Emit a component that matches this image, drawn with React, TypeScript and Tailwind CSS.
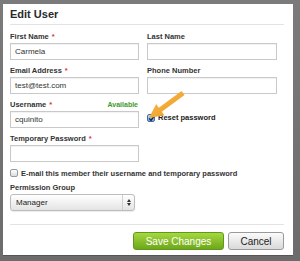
import { ReactNode } from "react";

const font = { fontFamily: '"Liberation Sans", Arial, sans-serif' };

function Label({ children, req, extra }: { children: ReactNode; req?: boolean; extra?: ReactNode }) {
   return (
      <div className="mb-[2px] flex h-[9px] items-center justify-between text-[7.5px] leading-[9px] font-bold text-[#333]">
         <span>
            {children}
            {req && <span className="ml-[3px] text-[#d9342b]">*</span>}
         </span>
         {extra}
      </div>
   );
}

function Field({ label, value, req, extra }: { label: string; value?: string; req?: boolean; extra?: ReactNode }) {
   return (
      <div className="mb-[6px]">
         <Label req={req} extra={extra}>
            {label}
         </Label>
         <div className="flex h-[17px] items-center border border-[#c9c9c9] bg-white px-[4px] text-[8px] text-[#333] shadow-[inset_0_1px_1px_rgba(0,0,0,0.06)]">
            {value}
         </div>
      </div>
   );
}

function Arrow() {
   return (
      <svg className="absolute top-[88px] left-[141px]" width="50" height="35" viewBox="0 0 50 35">
         <defs>
            <linearGradient id="ag" x1="0" y1="0" x2="1" y2="1">
               <stop offset="0" stopColor="#f7bb4a" />
               <stop offset="1" stopColor="#ee9a26" />
            </linearGradient>
         </defs>
         <polygon
            points="8,30 23.4,27.3 20.8,23.7 43.5,7 40.5,3 17.8,19.7 15.2,16.1"
            fill="url(#ag)"
         />
      </svg>
   );
}

export default function App() {
   return (
      <div
         style={font}
         className="relative h-[261px] w-[300px] bg-gradient-to-b from-[#7b7b7b] to-[#6c6c6c] pt-[4px] pr-[7px] pb-[5px] pl-[3px]"
      >
         <div className="h-full border-b border-[#555] bg-white px-[7px] pt-[3px]">
            <div className="text-[11px] leading-[14px] font-bold text-[#2a2a2a]">Edit User</div>
            <div className="mt-[3px] h-px w-[274px] bg-[#e3e3e3]" />

            <div className="mt-[7px] grid grid-cols-[129px_130px] gap-x-[8px]">
               <Field label="First Name" value="Carmela" req />
               <Field label="Last Name" />
               <Field label="Email Address" value="test@test.com" req />
               <Field label="Phone Number" />
               <Field
                  label="Username"
                  value="cquinito"
                  req
                  extra={<span className="pr-[1px] text-[7px] text-[#3e9a2c]">Available</span>}
               />
               <div className="flex items-start pt-[13px]">
                  <div className="flex items-center gap-[3px]">
                     <div className="relative flex size-[8px] items-center justify-center rounded-[2px] border border-[#4a6c9c] bg-gradient-to-b from-[#bcdcfb] to-[#6aa5e6]">
                        <svg width="8" height="8" viewBox="0 0 8 8" className="absolute -top-[1px] left-[0px]">
                           <path d="M1.2 4.4 L3 6.4 L7 0.8" fill="none" stroke="#14233f" strokeWidth="1.4" />
                        </svg>
                     </div>
                     <span className="text-[7.5px] leading-[9px] font-bold text-[#222]">Reset password</span>
                  </div>
               </div>
               <Field label="Temporary Password" req />
               <div />
            </div>

            <div className="flex h-[10px] items-center gap-[3px]">
               <div className="size-[8px] rounded-[2px] border border-[#9a9a9a] bg-gradient-to-b from-white to-[#dcdcdc]" />
               <span className="text-[7.5px] leading-[9px] font-bold text-[#333]">
                  E-mail this member their username and temporary password
               </span>
            </div>

            <div className="mt-[5px]">
               <Label>Permission Group</Label>
               <div className="flex h-[17px] w-[125px] items-center justify-between rounded-[3px] border border-[#bcbcbc] bg-gradient-to-b from-white to-[#e4e4e4] pl-[5px] text-[8px] text-[#222] shadow-[0_1px_1px_rgba(0,0,0,0.08)]">
                  <span>Manager</span>
                  <div className="flex h-full w-[12px] flex-col items-center justify-center gap-[1px] border-l border-[#d0d0d0]">
                     <div className="h-0 w-0 border-x-[2px] border-b-[3px] border-x-transparent border-b-[#333]" />
                     <div className="h-0 w-0 border-x-[2px] border-t-[3px] border-x-transparent border-t-[#333]" />
                  </div>
               </div>
            </div>

            <div className="mt-[13px] h-px w-[274px] bg-[#e3e3e3]" />

            <div className="mt-[7px] flex w-[274px] justify-end gap-[4px]">
               <div className="flex h-[18px] w-[91px] items-center justify-center rounded-[3px] border border-[#5e9a17] bg-gradient-to-b from-[#a6d83e] to-[#6ea71a] text-[10px] text-white">
                  Save Changes
               </div>
               <div className="flex h-[18px] w-[56px] items-center justify-center rounded-[3px] border border-[#9a9a9a] bg-gradient-to-b from-[#fbfbfb] to-[#d9d9d9] text-[10px] text-[#222]">
                  Cancel
               </div>
            </div>
         </div>
         <Arrow />
      </div>
   );
}
